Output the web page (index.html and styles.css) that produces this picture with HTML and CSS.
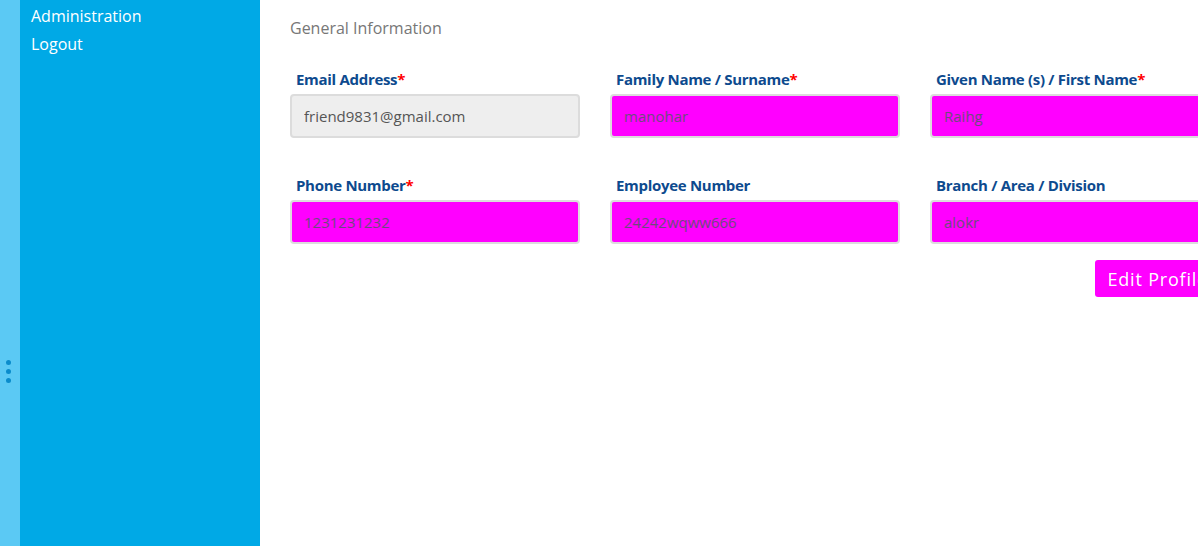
FILE: index.html
```html
<!DOCTYPE html>
<html>
<head>
<meta charset="utf-8">
<link rel="stylesheet" href="styles.css">
</head>
<body>
<div class="app">
  <div class="rail">
    <div class="dots"><span></span><span></span><span></span></div>
  </div>
  <nav class="sidebar">
    <a class="nav-link">Administration</a>
    <a class="nav-link">Logout</a>
  </nav>
  <main class="main">
    <h2 class="section-title">General Information</h2>
    <div class="form-grid">
      <div class="field">
        <label class="label">Email Address<span class="req">*</span></label>
        <input class="input input-disabled" value="friend9831@gmail.com" readonly>
      </div>
      <div class="field">
        <label class="label">Family Name / Surname<span class="req">*</span></label>
        <input class="input input-hl" value="manohar">
      </div>
      <div class="field">
        <label class="label">Given Name (s) / First Name<span class="req">*</span></label>
        <input class="input input-hl" value="Raihg">
      </div>
      <div class="field">
        <label class="label">Phone Number<span class="req">*</span></label>
        <input class="input input-hl" value="1231231232">
      </div>
      <div class="field">
        <label class="label">Employee Number</label>
        <input class="input input-hl" value="24242wqww666">
      </div>
      <div class="field">
        <label class="label">Branch / Area / Division</label>
        <input class="input input-hl" value="alokr">
      </div>
    </div>
    <div class="actions">
      <button class="btn">Edit Profile</button>
    </div>
  </main>
</div>
</body>
</html>
```

FILE: styles.css
```css
html, body {
  margin: 0;
  padding: 0;
  height: 100%;
  overflow: hidden;
  font-family: "Open Sans", "Noto Sans", sans-serif;
  background: #fff;
}
.app {
  display: flex;
  height: 546px;
  width: 1260px;
}
.rail {
  width: 20px;
  flex: none;
  background: #5bc9f4;
  display: flex;
  align-items: center;
  justify-content: center;
}
.dots {
  display: flex;
  flex-direction: column;
  gap: 4px;
  margin-top: 196px;
  margin-right: 4px;
}
.dots span {
  width: 5px;
  height: 5px;
  border-radius: 50%;
  background: #0a8ccc;
}
.sidebar {
  width: 240px;
  flex: none;
  background: #00a9e6;
  display: flex;
  flex-direction: column;
  padding: 2px 0 0 11px;
  box-sizing: border-box;
}
.nav-link {
  color: #fff;
  font-size: 16px;
  line-height: 28px;
}
.main {
  flex: none;
  width: 930px;
  padding: 0 0 0 30px;
}
.section-title {
  margin: 16px 0 0 0;
  font-size: 16px;
  font-weight: 400;
  color: #777;
  line-height: 24px;
}
.form-grid {
  display: grid;
  grid-template-columns: repeat(3, 290px);
  column-gap: 30px;
  row-gap: 37px;
  margin-top: 29px;
}
.field {
  display: flex;
  flex-direction: column;
}
.label {
  font-size: 15px;
  font-weight: 700;
  color: #0d4a8e;
  line-height: 20px;
  padding-left: 6px;
  margin-bottom: 5px;
  letter-spacing: -0.3px;
}
.req {
  color: #ff0000;
}
.input {
  height: 44px;
  box-sizing: border-box;
  border: 2px solid #dcdcdc;
  border-radius: 4px;
  padding: 0 12px;
  font-family: "Open Sans", "Noto Sans", sans-serif;
  font-size: 15px;
  outline: none;
}
.input-disabled {
  background: #eeeeee;
  color: #555;
}
.input-hl {
  background: #ff00ff;
  color: #6e4a7e;
}
.actions {
  display: flex;
  justify-content: flex-end;
  margin-top: 16px;
}
.btn {
  background: #ff00ff;
  color: #fff;
  border: none;
  border-radius: 3px;
  height: 37px;
  padding: 0 12px;
  font-family: "Open Sans", "Noto Sans", sans-serif;
  font-size: 18px;
  letter-spacing: 0.8px;
}
```
